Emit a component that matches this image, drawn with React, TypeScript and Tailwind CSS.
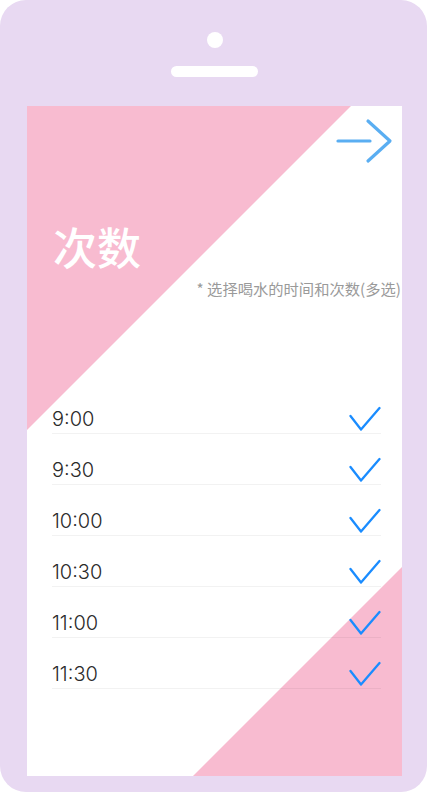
import React from "react";

const times = ["9:00", "9:30", "10:00", "10:30", "11:00", "11:30"];

const Check = () => (
  <svg width="32" height="26" viewBox="0 0 32 26" fill="none">
    <path
      d="M1.5 10 L12 23.5 L30.5 2"
      stroke="#1a8cff"
      strokeWidth="2.3"
      strokeLinecap="round"
      strokeLinejoin="round"
    />
  </svg>
);

const Arrow = () => (
  <svg width="58" height="46" viewBox="0 0 58 46" fill="none">
    <path d="M2 23 H34" stroke="#5aaef2" strokeWidth="3.2" strokeLinecap="round" />
    <path
      d="M32 3 L54 23 L32 43"
      stroke="#5aaef2"
      strokeWidth="3.2"
      strokeLinecap="round"
      strokeLinejoin="round"
    />
  </svg>
);

export default function App() {
  return (
    <div className="w-[427px] h-[792px] bg-white">
      <div className="w-full h-full rounded-[26px] bg-[#e8d9f2] flex flex-col items-center pl-[27px] pr-[25px] pt-[32px]">
        {/* camera + speaker */}
        <div className="w-[16px] h-[16px] rounded-full bg-white" />
        <div className="mt-[18px] w-[87px] h-[11px] rounded-full bg-white" />

        {/* screen */}
        <div className="mt-[29px] relative w-[375px] h-[670px] bg-white overflow-hidden">
          <div className="absolute top-0 left-0 w-[324px] h-[324px] bg-[#f8bbd0] [clip-path:polygon(0_0,100%_0,0_100%)]" />
          <div className="absolute bottom-0 right-0 w-[209px] h-[209px] bg-[#f8bbd0] [clip-path:polygon(100%_0,100%_100%,0_100%)]" />

          <div className="relative flex flex-col">
            <div className="flex justify-end pt-[12px] pr-[8px]">
              <Arrow />
            </div>

            <h1
              className="mt-[60px] pl-[26px] text-[44px] leading-[44px] font-medium text-white"
              style={{ fontFamily: '"Noto Sans CJK SC", sans-serif' }}
            >
              次数
            </h1>

            <p
              className="mt-[8px] pr-[1px] text-right text-[15.3px] leading-[24px] text-[#9a9a9a]"
              style={{ fontFamily: '"Noto Sans CJK SC", sans-serif' }}
            >
              * 选择喝水的时间和次数(多选)
            </p>

            <ul className="mt-[83px] ml-[25px] mr-[21px]" style={{ fontFamily: "Inter, sans-serif" }}>
              {times.map((t) => (
                <li
                  key={t}
                  className="pt-[22px] flex items-center justify-between border-b border-black/[0.05]"
                >
                  <span className="text-[20px] leading-[28px] font-light text-[#2a2a2a]">{t}</span>
                  <Check />
                </li>
              ))}
            </ul>
          </div>
        </div>
      </div>
    </div>
  );
}
